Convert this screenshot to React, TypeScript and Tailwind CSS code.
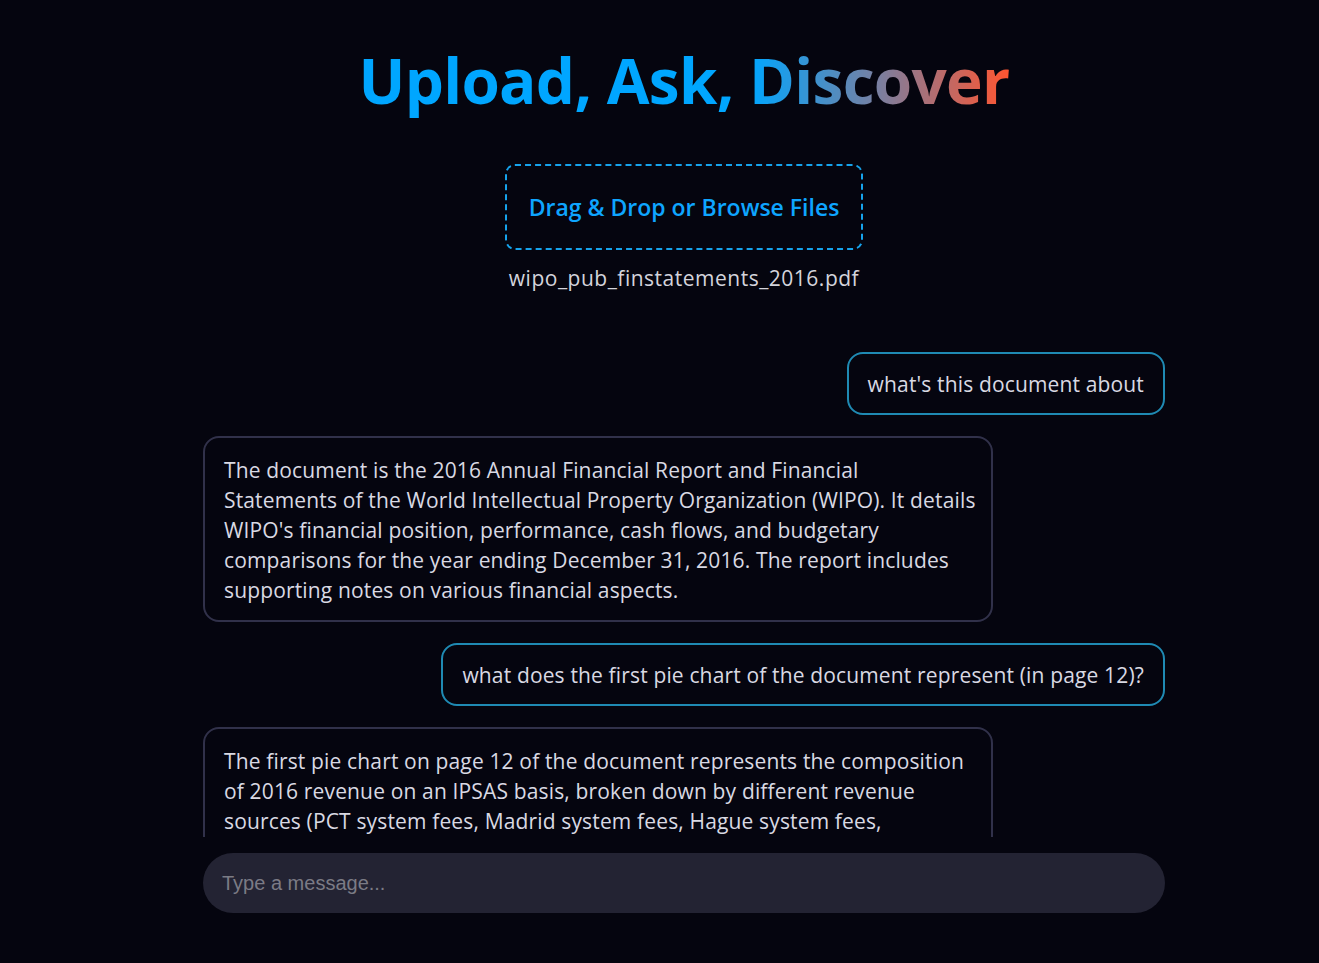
import React from "react";

const font = { fontFamily: '"Open Sans", "Noto Sans", sans-serif' };

const a1 = [
  "The document is the 2016 Annual Financial Report and Financial",
  "Statements of the World Intellectual Property Organization (WIPO). It details",
  "WIPO's financial position, performance, cash flows, and budgetary",
  "comparisons for the year ending December 31, 2016. The report includes",
  "supporting notes on various financial aspects.",
];
const a2 = [
  "The first pie chart on page 12 of the document represents the composition",
  "of 2016 revenue on an IPSAS basis, broken down by different revenue",
  "sources (PCT system fees, Madrid system fees, Hague system fees,",
];

function User({ text }: { text: string }) {
  return (
    <div className="flex justify-end">
      <div className="border-2 border-[#1f8ab3] rounded-[16px] px-[19px] pt-[15px] pb-[14px] text-[21px] leading-[30px] text-[#d9d9e3] whitespace-nowrap tracking-[0.15px]">
        {text}
      </div>
    </div>
  );
}

function Bot({ lines }: { lines: string[] }) {
  return (
    <div className="flex justify-start">
      <div className="w-[790px] border-2 border-[#31314a] rounded-[16px] px-[19px] pt-[17px] pb-[15px] text-[21px] leading-[30px] text-[#d9d9e3] tracking-[0.15px]">
        {lines.map((l, i) => (
          <div key={i} className="whitespace-nowrap">{l}</div>
        ))}
      </div>
    </div>
  );
}

export default function App() {
  return (
    <div className="h-[963px] w-full bg-[#05050f] overflow-hidden pl-[49px]" style={font}>
      <div className="flex flex-col items-center">
        <h1 className="mt-[42px] text-[62px] leading-[76px] font-bold tracking-[-0.7px] bg-[linear-gradient(90deg,#00a6ff_0%,#00a6ff_60%,#7a7fa0_80%,#ff5530_100%)] bg-clip-text text-transparent">
          Upload, Ask, Discover
        </h1>
        <div className="mt-[46px] w-[358px] h-[86px] border-2 border-dashed border-[#16a3ec] rounded-[10px] flex items-center justify-center">
          <span className="text-[23px] font-semibold text-[#0ea5ff] tracking-[0px]">Drag &amp; Drop or Browse Files</span>
        </div>
        <div className="mt-[13px] text-[21px] leading-[30px] text-[#d4d4dc] tracking-[0.5px]">wipo_pub_finstatements_2016.pdf</div>
        <div className="mt-[59px] w-[962px] h-[485px] overflow-hidden flex flex-col gap-[21px]">
          <User text="what's this document about" />
          <Bot lines={a1} />
          <User text="what does the first pie chart of the document represent (in page 12)?" />
          <Bot lines={a2} />
        </div>
        <div className="mt-[16px] w-[962px] h-[60px] rounded-full bg-[#232333] flex items-center px-[19px]">
          <input
            className="w-full bg-transparent outline-none text-[20px] text-[#e0e0e0] placeholder:text-[#7b7b85]"
            style={{ fontFamily: '"Liberation Sans", Arial, sans-serif' }}
            placeholder="Type a message..."
          />
        </div>
      </div>
    </div>
  );
}
